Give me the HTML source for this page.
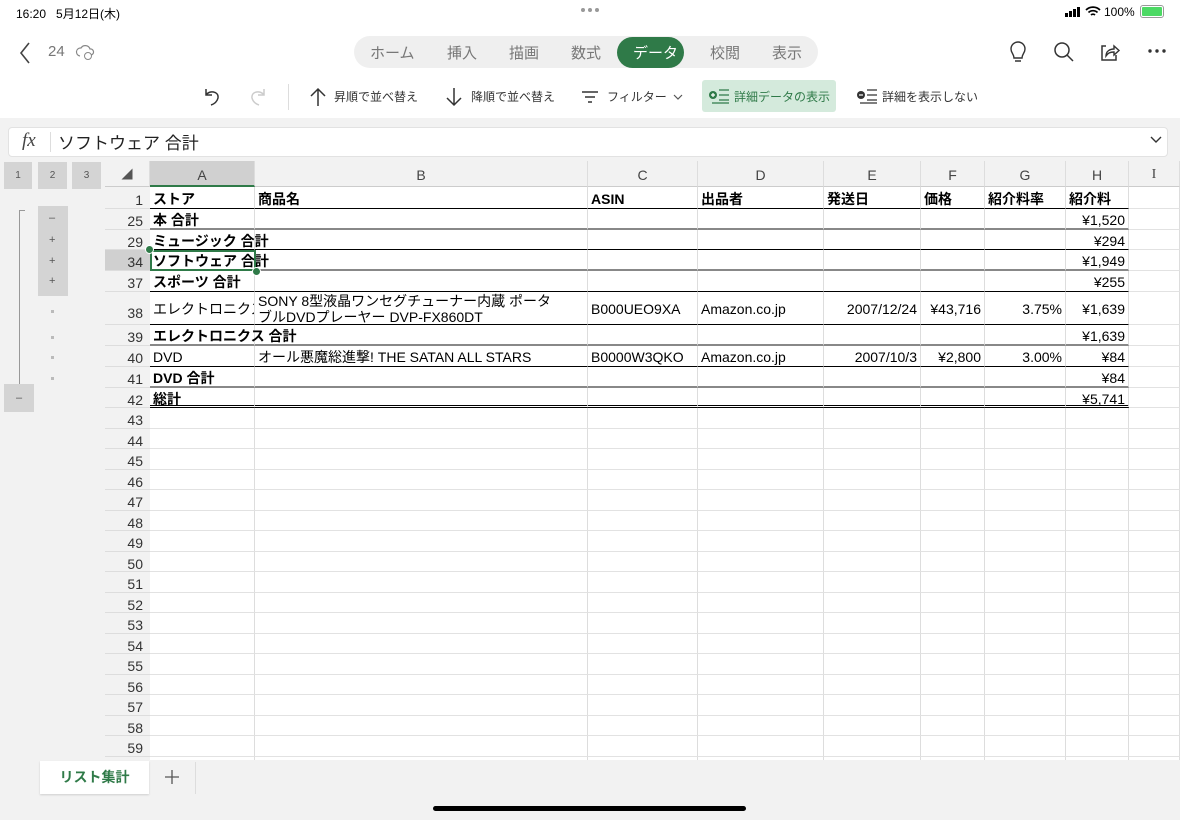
<!DOCTYPE html>
<html><head><meta charset="utf-8"><style>
*{margin:0;padding:0;box-sizing:border-box}
body{width:1180px;height:820px;overflow:hidden;background:#f2f2f2;font-family:"Liberation Sans","Noto Sans CJK JP",sans-serif;position:relative;color:#000}
.a{position:absolute}
#top{left:0;top:0;width:1180px;height:118px;background:#fff}
.tab{position:absolute;top:42px;font-size:15px;color:#777}
.tb{position:absolute;top:88px;font-size:12px;color:#333}
#grid{left:105px;top:161px;width:1075px;height:599px;background:#fff;overflow:hidden}
.ch{position:absolute;top:0;height:26px;background:#f2f2f2;border-right:1px solid #ddd;border-bottom:1px solid #ccc;font-size:14px;color:#444;text-align:center;line-height:28px}
.row{position:absolute;left:0;width:1075px}
.rh{position:absolute;left:0;width:45px;text-align:right;padding-right:7px;font-size:14px;color:#333;background:#f2f2f2;height:100%;border-bottom:1px solid #ddd}
.c{position:absolute;top:0;height:100%;border-right:1px solid #ddd;border-bottom:1px solid #e2e2e2;font-size:14px;padding:0 3px;white-space:nowrap;overflow:hidden}
.r{text-align:right}
.b{font-weight:bold}
.ov{overflow:visible;z-index:2}
.ob{position:absolute;background:#d4d4d4;font-size:10px;color:#555;text-align:center}
</style></head><body>
<div id="top" class="a">
 <div class="a" style="left:16px;top:5px;font-size:12px">16:20&nbsp;&nbsp;&nbsp;5月12日(木)</div>
 <div class="a" style="left:581px;top:8px;width:4px;height:4px;border-radius:2px;background:#999;box-shadow:7px 0 #999,14px 0 #999"></div>
 <svg class="a" style="left:1065px;top:6px" width="18" height="12"><rect x="0" y="7" width="3" height="4" fill="#000"/><rect x="4" y="5" width="3" height="6" fill="#000"/><rect x="8" y="3" width="3" height="8" fill="#000"/><rect x="12" y="1" width="3" height="10" fill="#000"/></svg>
 <svg class="a" style="left:1085px;top:5px" width="16" height="13"><path d="M1 5 a10 10 0 0 1 14 0 M3.5 7.5 a6.5 6.5 0 0 1 9 0 M6 10 a3 3 0 0 1 4 0" fill="none" stroke="#000" stroke-width="1.7"/></svg>
 <div class="a" style="left:1104px;top:5px;font-size:12px">100%</div>
 <div class="a" style="left:1140px;top:5px;width:24px;height:13px;border:1px solid #999;border-radius:3px;padding:1px"><div style="width:100%;height:100%;background:#4cd964;border-radius:1px"></div></div>
 <svg class="a" style="left:16px;top:40px" width="20" height="26"><path d="M13 3 L5 13 L13 23" fill="none" stroke="#444" stroke-width="1.6"/></svg>
 <div class="a" style="left:48px;top:43px;font-size:15px;color:#777">24</div>
 <svg class="a" style="left:74px;top:42px" width="22" height="20"><path d="M6 14 a4 4 0 0 1 1-8 a5 5 0 0 1 9 1 a3 3 0 0 1 1 6" fill="none" stroke="#888" stroke-width="1.2"/><circle cx="14" cy="14" r="3.5" fill="#fff" stroke="#888"/></svg>
 <div class="a" style="left:354px;top:36px;width:464px;height:32px;border-radius:16px;background:#efefef"></div>
 <div class="tab" style="left:370px">ホーム</div>
 <div class="tab" style="left:447px">挿入</div>
 <div class="tab" style="left:509px">描画</div>
 <div class="tab" style="left:571px">数式</div>
 <div class="a" style="left:617px;top:37px;width:67px;height:31px;border-radius:16px;background:#2f7a48"></div>
 <div class="tab" style="left:633px;color:#fff">データ</div>
 <div class="tab" style="left:710px">校閲</div>
 <div class="tab" style="left:772px">表示</div>
 <svg class="a" style="left:1006px;top:40px" width="24" height="26"><path d="M8 18 C8 14 5 13 5 9 a7 7 0 0 1 14 0 c0 4 -3 5 -3 9 Z M9 21 h6" fill="none" stroke="#333" stroke-width="1.4"/></svg>
 <svg class="a" style="left:1052px;top:40px" width="24" height="24"><circle cx="10" cy="10" r="7" fill="none" stroke="#333" stroke-width="1.5"/><path d="M15 15 L21 21" stroke="#333" stroke-width="1.5"/></svg>
 <svg class="a" style="left:1098px;top:40px" width="24" height="24"><path d="M8 6 H4 V20 H18 V15" fill="none" stroke="#333" stroke-width="1.5"/><path d="M8 16 C8 11 12 9 16 9 V6 L21 10.5 L16 15 V12 C12 12 10 13 8 16Z" fill="none" stroke="#333" stroke-width="1.4"/></svg>
 <svg class="a" style="left:1147px;top:48px" width="20" height="6"><circle cx="3" cy="3" r="1.7" fill="#333"/><circle cx="10" cy="3" r="1.7" fill="#333"/><circle cx="17" cy="3" r="1.7" fill="#333"/></svg>
 <svg class="a" style="left:200px;top:85px" width="24" height="24"><path d="M6 4 V10 H12 M6 10 C9 5 19 6 18 13 C17 17 14 19 11 20" fill="none" stroke="#333" stroke-width="1.5"/></svg>
 <svg class="a" style="left:246px;top:85px" width="24" height="24"><path d="M18 4 V10 H12 M18 10 C15 5 5 6 6 13 C7 17 10 19 13 20" fill="none" stroke="#ccc" stroke-width="1.5"/></svg>
 <div class="a" style="left:288px;top:84px;width:1px;height:26px;background:#ddd"></div>
 <svg class="a" style="left:308px;top:86px" width="20" height="22"><path d="M10 20 V3 M3 10 L10 3 L17 10" fill="none" stroke="#333" stroke-width="1.5"/></svg>
 <div class="tb" style="left:334px">昇順で並べ替え</div>
 <svg class="a" style="left:444px;top:86px" width="20" height="22"><path d="M10 2 V19 M3 12 L10 19 L17 12" fill="none" stroke="#333" stroke-width="1.5"/></svg>
 <div class="tb" style="left:471px">降順で並べ替え</div>
 <svg class="a" style="left:580px;top:88px" width="20" height="18"><path d="M2 4 H18 M5 9 H15 M8 14 H12" stroke="#333" stroke-width="1.4"/></svg>
 <div class="tb" style="left:607px">フィルター</div>
 <svg class="a" style="left:673px;top:93px" width="10" height="8"><path d="M1 2 L5 6 L9 2" fill="none" stroke="#555" stroke-width="1.2"/></svg>
 <div class="a" style="left:702px;top:80px;width:134px;height:32px;background:#d4eadc;border-radius:3px"></div>
 <svg class="a" style="left:708px;top:87px" width="22" height="18"><circle cx="5" cy="8" r="4" fill="#2f7a48"/><path d="M3 8h4M5 6v4" stroke="#fff" stroke-width="1.2"/><path d="M11 3H21M11 8H21M11 13H21M4 16H21" stroke="#2f7a48" stroke-width="1.3"/></svg>
 <div class="tb" style="left:734px;color:#2f7a48">詳細データの表示</div>
 <svg class="a" style="left:856px;top:87px" width="22" height="18"><circle cx="5" cy="8" r="4" fill="#333"/><path d="M3 8h4" stroke="#fff" stroke-width="1.2"/><path d="M11 3H21M11 8H21M11 13H21M4 16H21" stroke="#333" stroke-width="1.3"/></svg>
 <div class="tb" style="left:882px">詳細を表示しない</div>
</div>
<div class="a" style="left:8px;top:127px;width:1160px;height:30px;background:#fff;border:1px solid #e2e2e2;border-radius:4px"></div>
<div class="a" style="left:22px;top:130px;font-family:'Liberation Serif',serif;font-style:italic;font-size:19px;color:#444">fx</div>
<div class="a" style="left:50px;top:132px;width:1px;height:20px;background:#ddd"></div>
<div class="a" style="left:58px;top:129px;font-size:17px;color:#222">ソフトウェア 合計</div>
<svg class="a" style="left:1150px;top:136px" width="12" height="8"><path d="M1 1 L6 6 L11 1" fill="none" stroke="#333" stroke-width="1.4"/></svg>
<!-- outline -->
<div class="ob" style="left:4px;top:162px;width:28px;height:27px;line-height:27px">1</div>
<div class="ob" style="left:38px;top:162px;width:29px;height:27px;line-height:27px">2</div>
<div class="ob" style="left:72px;top:162px;width:29px;height:27px;line-height:27px">3</div>
<div class="a" style="left:19px;top:210px;width:6px;height:175px;border-left:1px solid #999;border-top:1px solid #999"></div>
<div class="ob" style="left:38px;top:206px;width:30px;height:90px"></div>
<div class="a" style="left:49px;top:212px;font-size:11px;color:#555">–</div>
<div class="a" style="left:49px;top:234px;font-size:11px;color:#555">+</div>
<div class="a" style="left:49px;top:255px;font-size:11px;color:#555">+</div>
<div class="a" style="left:49px;top:275px;font-size:11px;color:#555">+</div>
<div class="a" style="left:51px;top:310px;width:3px;height:3px;background:#bbb"></div>
<div class="a" style="left:51px;top:336px;width:3px;height:3px;background:#bbb"></div>
<div class="a" style="left:51px;top:356px;width:3px;height:3px;background:#bbb"></div>
<div class="a" style="left:51px;top:377px;width:3px;height:3px;background:#bbb"></div>
<div class="ob" style="left:4px;top:384px;width:30px;height:28px;line-height:28px;font-size:11px">–</div>
<div id="grid" class="a">
 <div class="ch" style="left:0;width:45px;color:#555;font-size:11px">◢</div>
 <div class="ch" style="left:45px;width:105px;background:#d0d0d0;border-bottom:2px solid #2f7a48">A</div>
 <div class="ch" style="left:150px;width:333px">B</div>
 <div class="ch" style="left:483px;width:110px">C</div>
 <div class="ch" style="left:593px;width:126px">D</div>
 <div class="ch" style="left:719px;width:97px">E</div>
 <div class="ch" style="left:816px;width:64px">F</div>
 <div class="ch" style="left:880px;width:81px">G</div>
 <div class="ch" style="left:961px;width:63px">H</div>
 <div class="ch" style="left:1024px;width:51px;font-family:'Liberation Serif',serif">I</div>
 <div id="rows"></div>
</div>
<div class="a" style="left:150px;top:250px;width:106px;height:21px;border:2px solid #2f7a48;z-index:3"></div>
<div class="a" style="left:145px;top:245px;width:9px;height:9px;border-radius:50%;background:#2f7a48;border:1px solid #fff;z-index:3"></div>
<div class="a" style="left:252px;top:267px;width:9px;height:9px;border-radius:50%;background:#2f7a48;border:1px solid #fff;z-index:3"></div>
<!-- tabs -->
<div class="a" style="left:40px;top:761px;width:109px;height:33px;background:#fff;box-shadow:0 1px 2px rgba(0,0,0,.15);font-size:14px;color:#2f7a48;font-weight:bold;text-align:center;line-height:32px">リスト集計</div>
<svg class="a" style="left:164px;top:769px" width="16" height="16"><path d="M8 1 V15 M1 8 H15" stroke="#555" stroke-width="1.3"/></svg>
<div class="a" style="left:195px;top:762px;width:1px;height:32px;background:#ddd"></div>
<div class="a" style="left:433px;top:806px;width:313px;height:5px;border-radius:3px;background:#000"></div>
<script>
var L=[0,45,150,483,593,719,816,880,961,1024,1075];
var data=[
["1",22,["ストア","商品名","ASIN","出品者","発送日","価格","紹介料率","紹介料"],1,"1px solid #000"],
["25",21,["本 合計","","","","","","","¥1,520"],1,"2px solid #888"],
["29",20,["ミュージック 合計","","","","","","","¥294"],1,"1px solid #000"],
["34",21,["ソフトウェア 合計","","","","","","","¥1,949"],1,"2px solid #888"],
["37",21,["スポーツ 合計","","","","","","","¥255"],1,"1px solid #000"],
["38",33,["エレクトロニクス","SONY 8型液晶ワンセグチューナー内蔵 ポータ<br>ブルDVDプレーヤー DVP-FX860DT","B000UEO9XA","Amazon.co.jp","2007/12/24","¥43,716","3.75%","¥1,639"],0,"1px solid #000"],
["39",21,["エレクトロニクス 合計","","","","","","","¥1,639"],1,"2px solid #888"],
["40",21,["DVD","オール悪魔総進撃! THE SATAN ALL STARS","B0000W3QKO","Amazon.co.jp","2007/10/3","¥2,800","3.00%","¥84"],0,"1px solid #000"],
["41",21,["DVD 合計","","","","","","","¥84"],1,"2px solid #888"],
["42",20,["総計","","","","","","","¥5,741"],1,"3px double #000"]];
for(var n=43;n<=60;n++)data.push([""+n,n%2?21:20,["","","","","","","",""],0,""]);
var h="",y=26;
data.forEach(function(d){
 var lh=d[1]+2;
 h+='<div class="row" style="top:'+y+'px;height:'+d[1]+'px"><div class="rh" style="line-height:'+(d[0]=="38"?d[1]+10:lh+2)+'px;'+(d[0]=="34"?"background:#d0d0d0;":"")+'">'+d[0]+'</div>';
 for(var i=0;i<8;i++){
  var right=(i>=4)&&d[0]!="1";
  var bb=d[4]?"border-bottom:"+d[4]+";":"";
  var bold=(d[3]&&i==0)||d[0]=="1";
  var st='left:'+L[i+1]+'px;width:'+(L[i+2]-L[i+1])+'px;'+bb+'line-height:'+lh+'px;';
  var cls='c'+(right?' r':'')+(bold?' b':'')+(d[3]&&i==0?' ov':'');
  var txt=d[2][i];
  if(d[0]=="38"&&i==1){st+='line-height:16px;padding-top:1px;';}
  h+='<div class="'+cls+'" style="'+st+'">'+txt+'</div>';
 }
 h+='<div class="c" style="left:1024px;width:51px"></div></div>';
 y+=d[1];
});
document.getElementById("rows").innerHTML=h;
</script>
</body></html>
